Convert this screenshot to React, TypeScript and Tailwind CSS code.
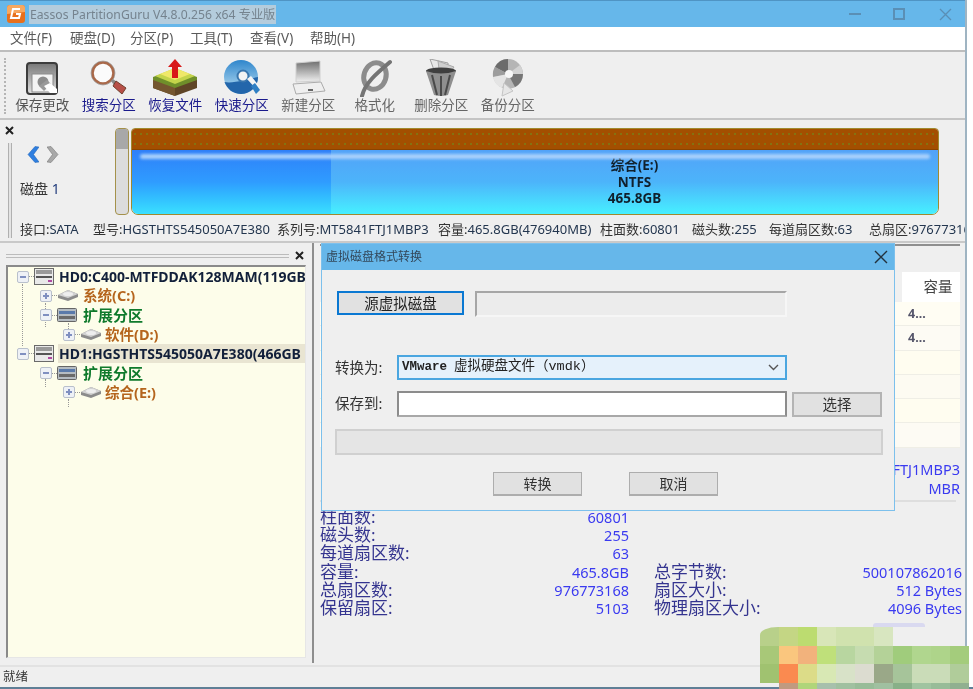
import React from "react"

const font = "font-['Noto_Sans','Noto_Sans_CJK_SC',sans-serif]"

const menus = ["文件(F)", "硬盘(D)", "分区(P)", "工具(T)", "查看(V)", "帮助(H)"]

function SaveIcon() {
  return (
    <svg width="36" height="36" viewBox="0 0 36 36">
      <defs>
        <linearGradient id="saveTop" x1="0" y1="0" x2="0" y2="1">
          <stop offset="0" stopColor="#777" />
          <stop offset="1" stopColor="#e2e2e2" />
        </linearGradient>
      </defs>
      <rect x="3" y="3" width="30" height="31" rx="3" fill="url(#saveTop)" stroke="#3c3c3c" strokeWidth="2" />
      <rect x="8" y="14" width="21" height="18" fill="#f4f4f4" stroke="#8a8a8a" />
      <circle cx="19" cy="22" r="5.5" fill="#8c8c8c" />
      <path d="M15 26 L23 20 L27 24 L20 31 Z" fill="#9a9a9a" />
      <path d="M20 26 L26 33 L33 33 L33 29 L26 23 Z" fill="#ffffff" />
    </svg>
  )
}

function SearchIcon() {
  return (
    <svg width="40" height="36" viewBox="0 0 40 36">
      <circle cx="14" cy="13" r="10.5" fill="#fbfbfb" stroke="#a9694a" strokeWidth="2.6" />
      <circle cx="14" cy="13" r="12" fill="none" stroke="#8a8a8a" strokeWidth="0.6" />
      <path d="M22 21 L24 19 L28 22 L25 25 Z" fill="#8a8a8a" />
      <path d="M27 21 L37 28 L33 34 L24 26 Z" fill="#b85048" stroke="#70402e" />
    </svg>
  )
}

function RecoverIcon() {
  return (
    <svg width="46" height="38" viewBox="0 0 46 38">
      <path d="M1 20 L23 28 L45 20 L45 29 L23 37 L1 29 Z" fill="#5f4526" />
      <path d="M1 20 L23 28 L23 37 L1 29 Z" fill="#74562f" />
      <path d="M1 18 L23 10 L45 18 L45 21 L23 29 L1 21 Z" fill="#6f8f2a" />
      <path d="M3 17 L23 9 L43 17 L23 25 Z" fill="#c4d44a" />
      <path d="M8 15 L23 9 L38 15 L23 21 Z" fill="#f0e868" />
      <path d="M23 0 L30 8 L26 8 L26 19 L20 19 L20 8 L16 8 Z" fill="#d81818" />
    </svg>
  )
}

function QuickIcon() {
  return (
    <svg width="38" height="38" viewBox="0 0 38 38">
      <defs>
        <linearGradient id="discTop" x1="0" y1="0" x2="0" y2="1">
          <stop offset="0" stopColor="#2f86cc" />
          <stop offset="1" stopColor="#bfe2f4" />
        </linearGradient>
      </defs>
      <circle cx="18" cy="18" r="17" fill="url(#discTop)" />
      <path d="M1.5 23 C10 25 24 20 35 18 C35 28 27 35 18 35 C10 35 4 30 1.5 23 Z" fill="#2366ab" />
      <circle cx="20" cy="17" r="5.5" fill="#f4f4f4" stroke="#3a77ae" strokeWidth="2" />
      <path d="M24 20 L34 31 L37 28 L28 17 Z" fill="#f4f4f4" />
      <path d="M28 27 L33 35 L37 31 L32 24 Z" fill="#2f7fc4" />
    </svg>
  )
}

function LaptopIcon() {
  return (
    <svg width="36" height="36" viewBox="0 0 36 36">
      <defs>
        <linearGradient id="screen" x1="0" y1="0" x2="0" y2="1">
          <stop offset="0" stopColor="#6f6f6f" />
          <stop offset="1" stopColor="#f0f0f0" />
        </linearGradient>
      </defs>
      <path d="M6 3 L30 1 L30 21 L6 22 Z" fill="url(#screen)" stroke="#d0d0d0" />
      <path d="M3 24 L31 22 L35 31 L6 34 Z" fill="#efefef" stroke="#ababab" />
      <rect x="18" y="29" width="5" height="2" fill="#666" />
    </svg>
  )
}

function FormatIcon() {
  return (
    <svg width="36" height="38" viewBox="0 0 36 38">
      <ellipse cx="18" cy="17" rx="11" ry="13.5" fill="none" stroke="#8c8c8c" strokeWidth="5" transform="rotate(18 18 17)" />
      <path d="M5 37 C8 24 20 14 33 3" fill="none" stroke="#747474" strokeWidth="4" strokeLinecap="round" />
    </svg>
  )
}

function TrashIcon() {
  return (
    <svg width="36" height="38" viewBox="0 0 36 38">
      <path d="M7 0 L25 4 L25 13 L11 11 Z" fill="#e8e8e8" stroke="#a0a0a0" />
      <path d="M15 2 L31 8 L27 14 L16 10 Z" fill="#cfcfcf" stroke="#aaa" />
      <ellipse cx="18" cy="12" rx="15" ry="3.5" fill="#3f3f3f" />
      <path d="M3 12 L11 36 Q18 38 25 36 L33 12 Q18 17 3 12 Z" fill="#8f8f8f" />
      <path d="M9 16 L14 36 M18 17 L18 37 M27 16 L22 36" stroke="#4a4a4a" strokeWidth="2" />
    </svg>
  )
}

function BackupIcon() {
  return (
    <svg width="36" height="38" viewBox="0 0 36 38">
      <circle cx="18" cy="15" r="15" fill="#b5b5b5" />
      <path d="M18 15 L18 0 A15 15 0 0 0 5 8 Z" fill="#6c6c6c" />
      <path d="M18 15 L5 8 A15 15 0 0 0 3 18 Z" fill="#9c9c9c" />
      <path d="M18 15 L30 6 A15 15 0 0 1 33 15 Z" fill="#d2d2d2" />
      <path d="M18 15 L33 15 A15 15 0 0 1 25 28 Z" fill="#767676" />
      <path d="M18 15 L3 18 A15 15 0 0 0 12 29 Z" fill="#e4e4e4" />
      <circle cx="19" cy="15" r="4" fill="#f6f6f6" />
      <path d="M14 24 L23 32 L12 37 Z" fill="#e6e6e6" stroke="#c4c4c4" />
    </svg>
  )
}

const tools = [
  { label: "保存更改", icon: SaveIcon, color: "text-[#555555]" },
  { label: "搜索分区", icon: SearchIcon, color: "text-[#1a1a8c]" },
  { label: "恢复文件", icon: RecoverIcon, color: "text-[#1a1a8c]" },
  { label: "快速分区", icon: QuickIcon, color: "text-[#1a1a8c]" },
  { label: "新建分区", icon: LaptopIcon, color: "text-[#666666]" },
  { label: "格式化", icon: FormatIcon, color: "text-[#666666]" },
  { label: "删除分区", icon: TrashIcon, color: "text-[#666666]" },
  { label: "备份分区", icon: BackupIcon, color: "text-[#666666]" },
]

const infoLine = [
  { k: "接口:", v: "SATA", w: "w-[73px]" },
  { k: "型号:", v: "HGSTHTS545050A7E380", w: "w-[184px]" },
  { k: "系列号:", v: "MT5841FTJ1MBP3", w: "w-[161px]" },
  { k: "容量:", v: "465.8GB(476940MB)", w: "w-[162px]" },
  { k: "柱面数:", v: "60801", w: "w-[92px]" },
  { k: "磁头数:", v: "255", w: "w-[77px]" },
  { k: "每道扇区数:", v: "63", w: "w-[100px]" },
  { k: "总扇区:", v: "976773168", w: "w-[97px]" },
]

function Expander({ open }: { open: boolean }) {
  return (
    <span className="relative w-[12px] h-[12px] shrink-0 rounded-[2px] border border-[#b9c0cc] bg-[#eef1f6] flex items-center justify-center">
      <span className="w-[6px] h-[2px] bg-[#7f8fc0]" />
      {!open && <span className="absolute w-[2px] h-[6px] bg-[#7f8fc0]" />}
    </span>
  )
}

function DriveIcon() {
  return (
    <svg width="20" height="17" viewBox="0 0 20 17" className="shrink-0">
      <rect x="0.5" y="0.5" width="19" height="16" fill="#e9e9e9" stroke="#6a6a6a" />
      <rect x="2" y="2" width="16" height="4" fill="#9a9a9a" />
      <rect x="2" y="8" width="16" height="2" fill="#555" />
      <rect x="14" y="12" width="4" height="2" fill="#b04aa0" />
    </svg>
  )
}

function ExtendedIcon() {
  return (
    <svg width="20" height="14" viewBox="0 0 20 14" className="shrink-0">
      <rect x="0.5" y="0.5" width="19" height="13" rx="1" fill="#b5bcc2" stroke="#666" />
      <rect x="2" y="3" width="16" height="3" fill="#5a7aaa" />
      <rect x="2" y="8" width="16" height="3" fill="#6a6a6a" />
    </svg>
  )
}

function PartIcon() {
  return (
    <svg width="22" height="13" viewBox="0 0 22 13" className="shrink-0">
      <path d="M1 6 L11 1 L21 5 L21 8 L11 12 L1 9 Z" fill="#8b8b8b" />
      <path d="M1 6 L11 1 L21 5 L11 9 Z" fill="#d2d2d2" />
      <ellipse cx="11" cy="5" rx="5" ry="2" fill="#eeeeee" />
    </svg>
  )
}

const tree = [
  { pad: "pl-[9px]", open: true, icon: <DriveIcon />, gap: "ml-[4px]", text: "HD0:C400-MTFDDAK128MAM(119GB", cls: "text-[#12203a] text-[14px]", sel: false },
  { pad: "pl-[32px]", open: false, icon: <PartIcon />, gap: "ml-[3px]", text: "系统(C:)", cls: "text-[#b5651d] text-[14.5px]", sel: false },
  { pad: "pl-[32px]", open: true, icon: <ExtendedIcon />, gap: "ml-[5px]", text: "扩展分区", cls: "text-[#0f7a2c] text-[15px]", sel: false },
  { pad: "pl-[55px]", open: false, icon: <PartIcon />, gap: "ml-[2px]", text: "软件(D:)", cls: "text-[#b5651d] text-[14.5px]", sel: false },
  { pad: "pl-[9px]", open: true, icon: <DriveIcon />, gap: "ml-[4px]", text: "HD1:HGSTHTS545050A7E380(466GB", cls: "text-[#12203a] text-[14px]", sel: true },
  { pad: "pl-[32px]", open: true, icon: <ExtendedIcon />, gap: "ml-[5px]", text: "扩展分区", cls: "text-[#0f7a2c] text-[15px]", sel: false },
  { pad: "pl-[55px]", open: false, icon: <PartIcon />, gap: "ml-[2px]", text: "综合(E:)", cls: "text-[#b5651d] text-[14.5px]", sel: false },
]

const rowsBg = ["bg-[#fffdf3]", "bg-[#fdfbf4]", "bg-[#fffdf0]", "bg-[#fdfbf2]", "bg-[#fffdf0]", "bg-[#fdfbf4]"]

const details = [
  ["柱面数:", "60801", "", ""],
  ["磁头数:", "255", "", ""],
  ["每道扇区数:", "63", "", ""],
  ["容量:", "465.8GB", "总字节数:", "500107862016"],
  ["总扇区数:", "976773168", "扇区大小:", "512 Bytes"],
  ["保留扇区:", "5103", "物理扇区大小:", "4096 Bytes"],
]

const mosaic = [
  ["#b8d08a", "#c4d684", "#bcdc70", "#d8e6b8", "#d0e2ae", "#d0e2ae", "#d8e6c0", "", "", "", ""],
  ["#a8c878", "#fac67e", "#f2b27c", "#bfe07a", "#b8d6a0", "#c6dcb0", "#b4d298", "#a0cc7c", "#b0d68e", "#aed48a", "#a4cc7c"],
  ["#a0c270", "#fa8a50", "#dcdc88", "#d8e8b4", "#d8e2c8", "#dcdcd0", "#9aa888", "#a6c49a", "#cadcb8", "#cadcb8", "#b0cc9a"],
  ["", "#c09a80", "#b0d57a", "#a7c0ac", "#a0c0a0", "#98bc98", "#a0c0a0", "#88b088", "#a0c4a0", "#98bc98", "#90b090"],
]

export default function App() {
  return (
    <div className={`relative w-[973px] h-[689px] overflow-hidden bg-white blur-[0.35px] ${font}`}>
      <div className="w-[967px] h-[687px] flex flex-col bg-[#efefef] border-r-2 border-[#9fb4c2]">
        {/* title bar */}
        <div className="h-[27px] shrink-0 bg-[#66b7ea] border-t border-[#4f94c4] flex items-center pl-[6px]">
          <svg width="20" height="20" viewBox="0 0 20 20">
            <rect x="1" y="1" width="18" height="18" rx="3" fill="#e8701c" />
            <path d="M1 4 Q1 1 4 1 L16 1 Q19 1 19 4 L19 8 L1 10 Z" fill="#f7a860" />
            <path d="M14 5 L7 5 L5 14 L13 14 L14 10 L10 10" fill="none" stroke="#fff" strokeWidth="2" />
          </svg>
          <span className="ml-[3px] px-[1px] h-[19px] leading-[19px] bg-[#b4ccdc] text-[#75838e] text-[12.2px] whitespace-nowrap">
            Eassos PartitionGuru V4.8.0.256 x64 专业版
          </span>
          <div className="ml-auto flex items-center pr-[13px]">
            <span className="w-[12px] h-[2px] bg-[#5a8fb5]" />
            <span className="ml-[32px] w-[12px] h-[12px] border-2 border-[#5a8fb5]" />
            <svg width="13" height="13" viewBox="0 0 13 13" className="ml-[34px]">
              <path d="M1 1 L12 12 M12 1 L1 12" stroke="#5a8fb5" strokeWidth="1.3" />
            </svg>
          </div>
        </div>

        {/* menu */}
        <div className="h-[25px] shrink-0 bg-white border-b-2 border-[#bdbdbd] flex items-center pl-[10px] gap-[17px] text-[13.5px] text-[#5a5a5a]">
          {menus.map((m) => (
            <span key={m} className="w-[43px] whitespace-nowrap">{m}</span>
          ))}
        </div>

        {/* toolbar */}
        <div className="h-[68px] shrink-0 flex pl-[9px] pt-[7px] border-b-2 border-[#c4c4c4] relative">
          <span className="absolute left-[4px] top-[6px] h-[56px] border-l-2 border-dotted border-[#b5b5b5]" />
          {tools.map((t) => (
            <div key={t.label} className="w-[66.5px] flex flex-col items-center">
              <div className="h-[38px] flex items-center justify-center">
                <t.icon />
              </div>
              <span className={`-mt-[1px] text-[13.5px] leading-[18px] whitespace-nowrap ${t.color}`}>{t.label}</span>
            </div>
          ))}
        </div>

        {/* disk panel */}
        <div className="h-[123px] shrink-0 flex border-b-2 border-[#c9c9c9]">
          <div className="w-[20px] shrink-0 pl-[5px] pt-[6px] flex flex-col">
            <svg width="9" height="9" viewBox="0 0 9 9">
              <path d="M1 1 L8 8 M8 1 L1 8" stroke="#222" strokeWidth="2" />
            </svg>
            <span className="mt-[8px] ml-[3px] w-[4px] h-[95px] border-x border-[#b0b0b0] bg-[#e4e4e4]" />
          </div>
          <div className="flex-1 flex flex-col min-w-0">
            <div className="h-[95px] shrink-0 flex pt-[8px]">
              <div className="w-[95px] shrink-0 flex flex-col">
                <div className="flex items-center gap-[8px] pl-[7px] pt-[18px]">
                  <svg width="12" height="17" viewBox="0 0 12 17">
                    <path d="M8 0.5 L1 8.5 L8 16.5 L12 16 L6.5 8.5 L12 1 Z" fill="#2f7fe0" stroke="#1b5fb0" strokeWidth="0.5" />
                  </svg>
                  <svg width="12" height="17" viewBox="0 0 12 17">
                    <path d="M4 0.5 L11 8.5 L4 16.5 L0 16 L5.5 8.5 L0 1 Z" fill="#a8a8a8" stroke="#6a6a6a" strokeWidth="0.5" />
                  </svg>
                </div>
                <span className="mt-[17px] text-[14px] leading-[18px] text-[#333] whitespace-nowrap">
                  磁盘 <span className="text-[#1f3a7a]">1</span>
                </span>
              </div>
              <div className="w-[14px] h-[87px] shrink-0 rounded-[4px] border border-[#a4914a] bg-[#dcdcdc] overflow-hidden">
                <div className="h-[20px] bg-[#a8a8a8]" />
              </div>
              <div className="relative ml-[2px] w-[808px] h-[87px] shrink-0 rounded-[4px] rounded-b-[7px] border border-[#a08a30] overflow-hidden flex flex-col">
                <div className="h-[21px] shrink-0 bg-[#a34f00] bg-[radial-gradient(circle,#74861a_0.6px,transparent_0.9px)] bg-[length:6px_10px] border-b border-[#8a4400]" />
                <div className="flex-1 flex">
                  <div className="w-[199px] shrink-0 bg-gradient-to-b from-[#2f7ff8] via-[#2f9cff] to-[#3be0ff]" />
                  <div className="relative z-10 flex-1 bg-gradient-to-b from-[#52a2f8] via-[#4cb4fa] to-[#46f0ff] flex flex-col items-center pt-[7px] text-[13.5px] leading-[16.5px] font-bold text-[#10202c]">
                    <span>综合(E:)</span>
                    <span>NTFS</span>
                    <span>465.8GB</span>
                  </div>
                </div>
                <span className="absolute z-10 left-[8px] right-[8px] top-[25px] h-[5px] rounded-full bg-[#a9d0fb] blur-[1.5px]" />
              </div>
            </div>
            <div className="flex-1 flex items-start pt-[4px] text-[13px] leading-[20px] whitespace-nowrap overflow-hidden">
              {infoLine.map((i) => (
                <span key={i.k} className={`${i.w} shrink-0`}>
                  <span className="text-[#333]">{i.k}</span>
                  <span className="text-[#23364f]">{i.v}</span>
                </span>
              ))}
            </div>
          </div>
        </div>

        {/* lower split */}
        <div className="flex-1 min-h-0 flex">
          <div className="w-[312px] shrink-0 flex flex-col pl-[6px]">
            <div className="h-[22px] shrink-0 flex items-center gap-[6px] pr-[6px] pt-[3px]">
              <span className="w-[283px] h-[4px] border-y border-[#bcbcbc]" />
              <svg width="9" height="9" viewBox="0 0 9 9">
                <path d="M1 1 L8 8 M8 1 L1 8" stroke="#222" strokeWidth="2" />
              </svg>
            </div>
            <div className="relative w-[300px] h-[393px] border-t-2 border-l-2 border-[#8a8a8a] border-r border-b border-r-[#e6e6e6] border-b-[#e6e6e6] bg-[#fdfdea] overflow-hidden">
              <span className="absolute left-[14px] top-[17px] h-[62px] border-l border-dotted border-[#999]" />
              <span className="absolute left-[37px] top-[36px] h-[24px] border-l border-dotted border-[#999]" />
              <span className="absolute left-[60px] top-[56px] h-[8px] border-l border-dotted border-[#999]" />
              <span className="absolute left-[37px] top-[112px] h-[8px] border-l border-dotted border-[#999]" />
              <span className="absolute left-[60px] top-[132px] h-[8px] border-l border-dotted border-[#999]" />
              {tree.map((n, i) => (
                <div key={i} className={`h-[19.3px] flex items-center whitespace-nowrap ${n.pad}`}>
                  <Expander open={n.open} />
                  <span className="w-[5px] shrink-0 border-t border-dotted border-[#999]" />
                  {n.icon}
                  <span className={`${n.gap} flex-1 pl-[1px] font-bold leading-[19px] overflow-hidden ${n.cls} ${n.sel ? "bg-[#e9e5d2]" : ""}`}>
                    {n.text}
                  </span>
                </div>
              ))}
            </div>
          </div>

          {/* right pane */}
          <div className="w-[2px] shrink-0 mb-[2px] bg-[#8e8e8e]" />
          <div className="w-[6px] shrink-0" />
          <div className="flex-1 min-w-0 flex flex-col pr-[5px]">
            <div className="h-[29px] shrink-0 pt-[1px]">
              <div className="h-[2px] bg-[#8f8f8f]" />
            </div>
            <div className="flex justify-end h-[30px] shrink-0 bg-[#f0f0f0]">
              <div className="w-[58px] bg-white flex items-center justify-center pl-[14px] text-[14.5px] text-[#444]">容量</div>
            </div>
            {rowsBg.map((bg, i) => (
              <div key={i} className={`h-[24.3px] shrink-0 flex justify-end border-b border-[#efeee6] ${bg}`}>
                <div className="w-[52px] text-[12.5px] leading-[24px] font-bold text-[#55556a]">{i < 2 ? "4..." : ""}</div>
              </div>
            ))}
            <div className="mt-[12px] flex flex-col items-end text-[14.5px] leading-[19px] text-[#3a3af0]">
              <span>MT5841FTJ1MBP3</span>
              <span>MBR</span>
            </div>
            <div className="mt-[2px] mr-[4px] h-[2px] bg-[#dedede]" />
            <div className="mt-[6px] grid grid-cols-[309px_308px] gap-x-[25px] text-[14.5px] leading-[18.3px] whitespace-nowrap">
              {details.map((d) => (
                <React.Fragment key={d[0]}>
                  <div className="flex justify-between">
                    <span className="text-[#34348f] text-[17px]">{d[0]}</span>
                    <span className="text-[#3a3af0]">{d[1]}</span>
                  </div>
                  <div className="flex justify-between">
                    <span className="text-[#34348f] text-[17px]">{d[2]}</span>
                    <span className="text-[#3a3af0]">{d[3]}</span>
                  </div>
                </React.Fragment>
              ))}
            </div>
          </div>
        </div>

        {/* status bar */}
        <div className="h-[22px] shrink-0 border-t-2 border-[#e2e2e2] flex items-center pl-[3px] text-[12.5px] text-[#333]">就绪</div>
      </div>
      <div className="absolute left-0 right-0 bottom-0 h-[2px] bg-[#5f7f96]" />

      {/* dialog */}
      <div className="absolute left-[321px] top-[243px] w-[574px] h-[268px] z-10 border border-[#7cc0ec] bg-[#efefef] flex flex-col">
        <div className="h-[26px] shrink-0 bg-[#66b7ea] flex items-center justify-between pl-[4px] pr-[6px] text-[12px] text-[#33475a]">
          <span>虚拟磁盘格式转换</span>
          <svg width="14" height="14" viewBox="0 0 14 14">
            <path d="M1 1 L13 13 M13 1 L1 13" stroke="#23323e" strokeWidth="1.4" />
          </svg>
        </div>
        <div className="flex-1 flex flex-col pl-[13px] pt-[21px]">
          <div className="h-[26px] flex pl-[2px]">
            <button className="w-[127px] h-[24px] bg-[#e1e1e1] border-2 border-[#0a78d2] text-[14.5px] leading-[20px] text-[#222]">源虚拟磁盘</button>
            <div className="ml-[11px] w-[312px] h-[26px] border-2 border-t-[#a6a6a6] border-l-[#a6a6a6] border-r-[#f6f6f6] border-b-[#f6f6f6] bg-[#ececec]" />
          </div>
          <div className="mt-[38px] h-[25px] flex items-center">
            <span className="w-[62px] text-[14.5px] text-[#333]">转换为:</span>
            <div className="w-[390px] h-[25px] border-2 border-[#4aa6e0] bg-[#e5f1fb] flex items-center pl-[3px] pr-[6px] text-[13.5px] text-[#222] font-['Liberation_Mono','Noto_Sans_CJK_SC',monospace]">
              <span className="font-bold text-[12.5px] mr-[7px]">VMware</span>
              <span>虚拟硬盘文件（vmdk）</span>
              <svg width="11" height="7" viewBox="0 0 11 7" className="ml-auto">
                <path d="M1 1 L5.5 5.5 L10 1" fill="none" stroke="#555" strokeWidth="1.4" />
              </svg>
            </div>
          </div>
          <div className="mt-[11px] h-[26px] flex items-center">
            <span className="w-[62px] text-[14.5px] text-[#333]">保存到:</span>
            <div className="w-[390px] h-[26px] border-2 border-[#8c8c8c] border-b-[#a8a8a8] rounded-[1px] bg-white" />
            <button className="ml-[5px] w-[90px] h-[25px] bg-[#e1e1e1] border-2 border-[#b4b4b4] text-[14.5px] leading-[20px] text-[#333]">选择</button>
          </div>
          <div className="mt-[12px] w-[548px] h-[26px] bg-[#e5e5e5] border-2 border-[#d0d0d0]" />
          <div className="mt-[17px] flex pl-[158px] gap-[47px]">
            <button className="w-[89px] h-[24px] bg-[#e1e1e1] border border-[#adadad] border-b-2 text-[14px] leading-[20px] text-[#333]">转换</button>
            <button className="w-[89px] h-[24px] bg-[#e1e1e1] border border-[#adadad] border-b-2 text-[14px] leading-[20px] text-[#333]">取消</button>
          </div>
        </div>
      </div>

      {/* pixelated watermark */}
      <span className="absolute left-[873px] top-[623px] z-20 w-[52px] h-[4px] rounded-t-[3px] bg-[#d9d9f0]" />
      <div className="absolute left-[760px] top-[627px] z-20 w-[209px] grid grid-cols-[repeat(11,19px)] auto-rows-[18.5px] rounded-tl-[18px_8px] overflow-hidden">
        {mosaic.flat().map((c, i) => (
          <div key={i} style={{ backgroundColor: c || "transparent" }} />
        ))}
      </div>
    </div>
  )
}
